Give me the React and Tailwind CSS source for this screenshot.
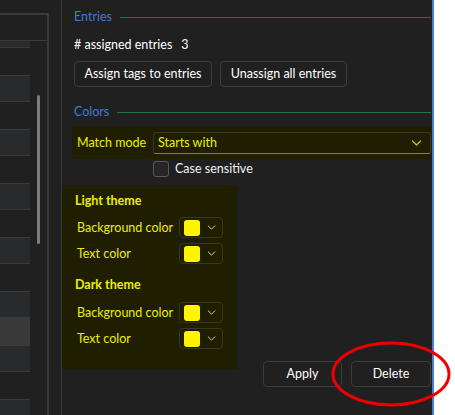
import React from 'react';

// Row stripes for the tag list on the left; the one at index 11 is the hovered row
const listRows = ['light', 'dark', 'light', 'dark', 'light', 'dark', 'light', 'dark', 'light', 'dark', 'light', 'hover', 'light', 'dark', 'light'];

const Chevron = ({ className, color }) => (
    <svg className={className} viewBox="0 0 10 6" fill="none">
        <path d="M1 1l4 4 4-4" stroke={color} strokeWidth="1.2" strokeLinecap="round" strokeLinejoin="round" />
    </svg>
);

const SectionHeader = ({ title }) => (
    <div className="flex items-center h-[21px] gap-[8px]">
        <span className="text-[12.5px] text-[#3f7bd2] leading-none">{title}</span>
        <div className="flex-1 h-px bg-[#1f7242]" />
    </div>
);

const ColorPicker = () => (
    <div className="w-[44px] h-[21px] border border-[#3a3816] rounded-[4px] flex items-center pl-[4px] gap-[7px]">
        <div className="w-[16px] h-[16px] rounded-[3px] bg-[#fff500]" />
        <Chevron className="w-[9px] h-[5px]" color="#d8d690" />
    </div>
);

const ColorRow = ({ label }) => (
    <div className="flex items-center h-[21px] pl-[15px]">
        <span className="w-[102px] text-[12.5px] text-[#eeee00] pt-[1px]">{label}</span>
        <ColorPicker />
    </div>
);

const TagList = () => (
    <div className="w-[61px] h-full bg-[#202020] pt-[13px] shrink-0">
        <div className="w-[49px] h-full border-t-2 border-r-2 border-[#3b3b3b] flex flex-col">
            <div className="h-[26px] border-b border-[#3b3b3b] shrink-0" />
            <div className="flex flex-1 overflow-hidden">
                <div className="w-[30px] -mt-[20px] flex flex-col shrink-0">
                    {listRows.map((kind, i) => (
                        <div
                            key={i}
                            className={
                                kind === 'light'
                                    ? 'h-[27px] shrink-0 bg-[#292a2c] border-y border-[#393a3c]'
                                    : kind === 'hover'
                                    ? 'h-[27px] shrink-0 bg-[#393939]'
                                    : 'h-[27px] shrink-0'
                            }
                        />
                    ))}
                </div>
                {/* scrollbar thumb */}
                <div className="ml-[7px] mt-[54px] w-[3px] h-[149px] rounded-full bg-[#7c7c7c]" />
            </div>
        </div>
    </div>
);

const TagEditor = () => (
    <div className="w-[373px] h-full bg-[#202020] border-l border-[#3a3a3a] border-r-2 border-r-[#4b7bdc] pl-[12px] pr-[1px] pt-[7px] flex flex-col shrink-0">
        <SectionHeader title="Entries" />

        <div className="mt-[7px] h-[20px] pt-[1px] flex items-center text-[12.5px] text-white">
            <span># assigned entries</span>
            <span className="ml-[9px]">3</span>
        </div>

        <div className="mt-[6px] flex gap-[8px]">
            <button className="h-[26px] w-[138px] border border-[#3d3d3d] rounded-[4px] text-[12.5px] text-white pt-[1px]">
                Assign tags to entries
            </button>
            <button className="h-[26px] w-[127px] border border-[#3d3d3d] rounded-[4px] text-[12.5px] text-white pt-[1px]">
                Unassign all entries
            </button>
        </div>

        <div className="mt-[15px]">
            <SectionHeader title="Colors" />
        </div>

        {/* match mode band */}
        <div className="mt-[3px] -ml-[2px] h-[33px] bg-[#1f1e00] flex items-center pl-[5px]">
            <span className="w-[76px] text-[12.5px] text-[#eeee00] pt-[1px]">Match mode</span>
            <div className="flex-1 h-[22px] border border-[#3a3818] border-b-[#8d8a00] rounded-[3px] flex items-center pl-[4px] pr-[8px]">
                <span className="flex-1 text-[12.5px] text-[#eeee00] pt-[1px]">Starts with</span>
                <Chevron className="w-[11px] h-[6px]" color="#c9c700" />
            </div>
        </div>

        <div className="mt-[2px] ml-[79px] h-[16px] flex items-center gap-[6px]">
            <div className="w-[16px] h-[16px] rounded-[3px] border border-[#5a5a5a] bg-[#262626]" />
            <span className="text-[12.5px] text-[#f2f2f2] pt-[1px]">Case sensitive</span>
        </div>

        <div className="mt-[8px] -ml-[12px] h-[202px] flex">
            {/* theme colours panel */}
            <div className="w-[175px] h-[184px] self-start bg-[#1f1e00] pt-[8px]">
                <div className="pl-[13px] h-[16px] pt-[1px] flex items-center text-[12.5px] font-bold text-[#eeee00]">Light theme</div>
                <div className="mt-[8px] flex flex-col gap-[5px]">
                    <ColorRow label="Background color" />
                    <ColorRow label="Text color" />
                </div>
                <div className="mt-[13px] pl-[13px] h-[16px] pt-[1px] flex items-center text-[12.5px] font-bold text-[#eeee00]">Dark theme</div>
                <div className="mt-[9px] flex flex-col gap-[5px]">
                    <ColorRow label="Background color" />
                    <ColorRow label="Text color" />
                </div>
            </div>

            <div className="ml-auto self-end flex gap-[9px]">
                <button className="h-[26px] w-[79px] border border-[#3d3d3d] rounded-[4px] text-[12.5px] text-white pt-[1px]">Apply</button>
                <button className="h-[26px] w-[80px] border border-[#3d3d3d] rounded-[4px] text-[12.5px] text-white pt-[1px]">Delete</button>
            </div>
        </div>
    </div>
);

export default function App() {
    return (
        <div className="relative w-[455px] h-[415px] bg-white flex overflow-hidden font-['Lato',sans-serif]">
            <TagList />
            <TagEditor />
            {/* red highlight ring around Delete */}
            <svg className="absolute left-0 top-0 w-[455px] h-[415px] pointer-events-none" viewBox="0 0 455 415">
                <ellipse cx="391" cy="374" rx="58" ry="31" fill="none" stroke="#ee0000" strokeWidth="3" />
            </svg>
        </div>
    );
}
